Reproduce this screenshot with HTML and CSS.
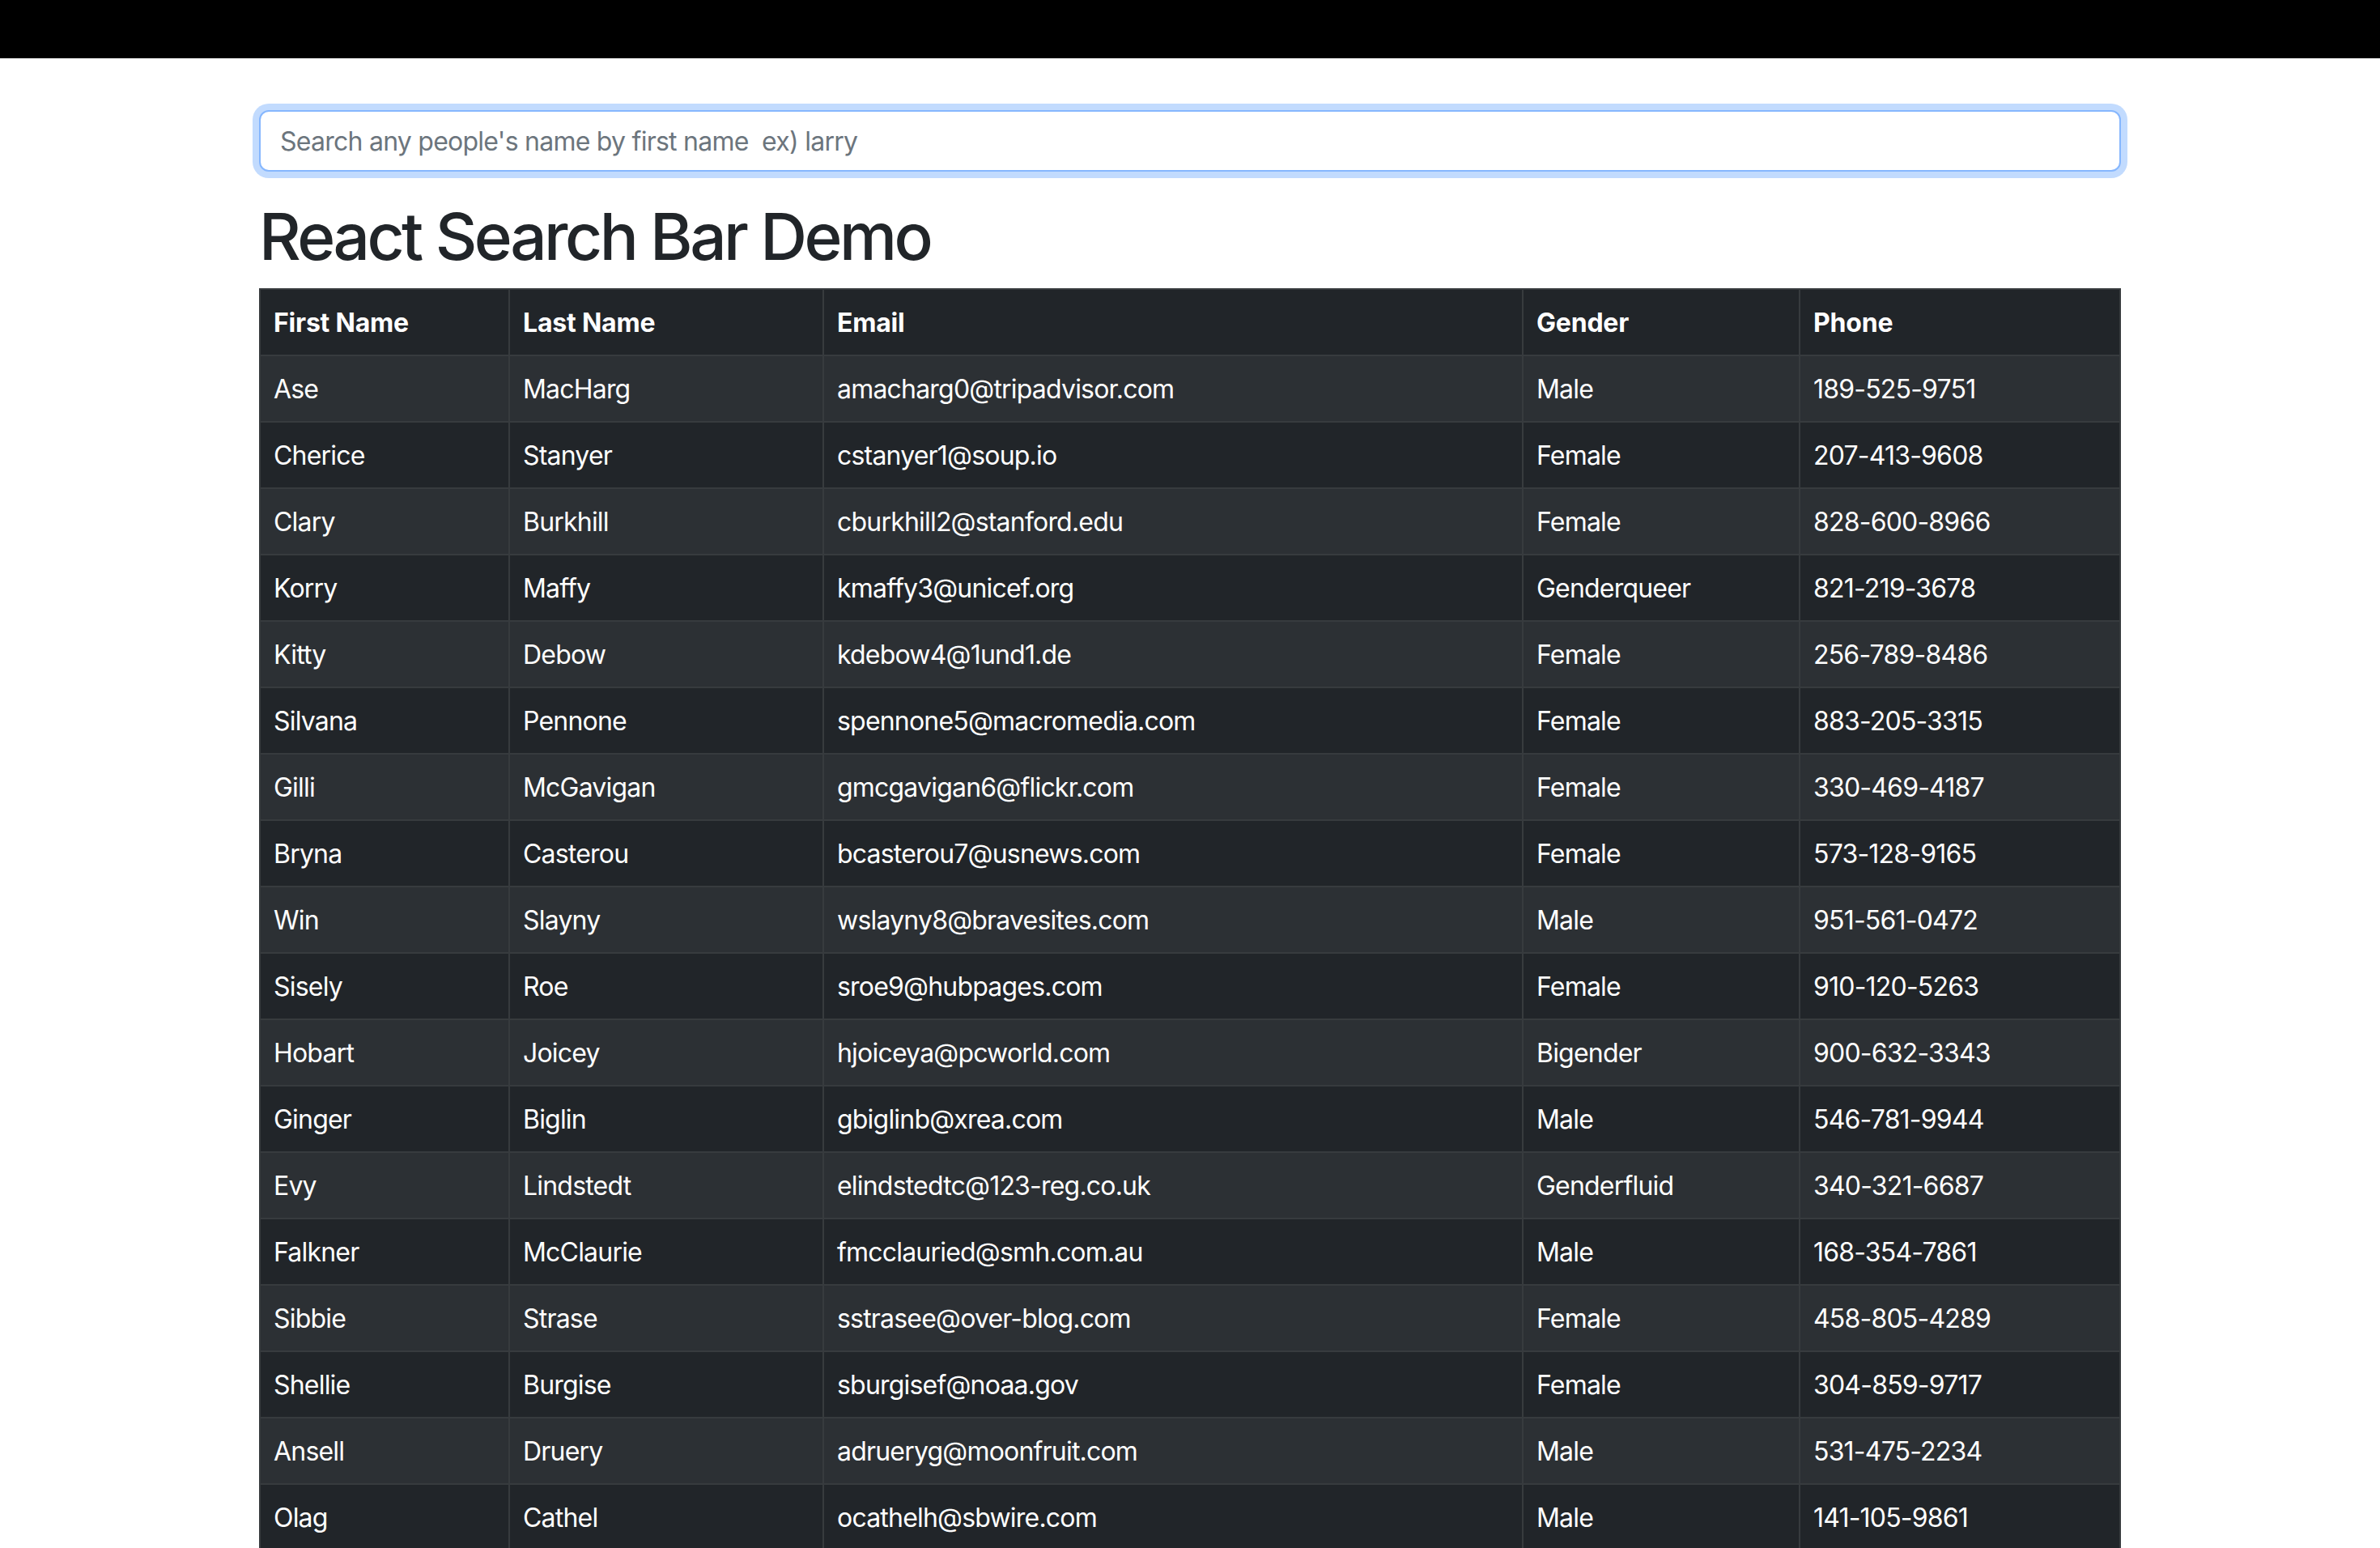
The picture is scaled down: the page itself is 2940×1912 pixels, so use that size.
FILE: index.html
```html
<!DOCTYPE html>
<html lang="en">
<head>
<meta charset="utf-8">
<title>React Search Bar Demo</title>
<link rel="stylesheet" href="styles.css">
</head>
<body>
<div class="topbar"></div>
<main class="container">
  <input class="search" type="text" placeholder="Search any people's name by first name  ex) larry">
  <h1 class="title">React Search Bar Demo</h1>
  <table class="people">
    <colgroup>
      <col class="c-first"><col class="c-last"><col class="c-email"><col class="c-gender"><col class="c-phone">
    </colgroup>
    <thead>
      <tr><th>First Name</th><th>Last Name</th><th>Email</th><th>Gender</th><th>Phone</th></tr>
    </thead>
    <tbody>
      <tr><td>Ase</td><td>MacHarg</td><td>amacharg0@tripadvisor.com</td><td>Male</td><td>189-525-9751</td></tr>
      <tr><td>Cherice</td><td>Stanyer</td><td>cstanyer1@soup.io</td><td>Female</td><td>207-413-9608</td></tr>
      <tr><td>Clary</td><td>Burkhill</td><td>cburkhill2@stanford.edu</td><td>Female</td><td>828-600-8966</td></tr>
      <tr><td>Korry</td><td>Maffy</td><td>kmaffy3@unicef.org</td><td>Genderqueer</td><td>821-219-3678</td></tr>
      <tr><td>Kitty</td><td>Debow</td><td>kdebow4@1und1.de</td><td>Female</td><td>256-789-8486</td></tr>
      <tr><td>Silvana</td><td>Pennone</td><td>spennone5@macromedia.com</td><td>Female</td><td>883-205-3315</td></tr>
      <tr><td>Gilli</td><td>McGavigan</td><td>gmcgavigan6@flickr.com</td><td>Female</td><td>330-469-4187</td></tr>
      <tr><td>Bryna</td><td>Casterou</td><td>bcasterou7@usnews.com</td><td>Female</td><td>573-128-9165</td></tr>
      <tr><td>Win</td><td>Slayny</td><td>wslayny8@bravesites.com</td><td>Male</td><td>951-561-0472</td></tr>
      <tr><td>Sisely</td><td>Roe</td><td>sroe9@hubpages.com</td><td>Female</td><td>910-120-5263</td></tr>
      <tr><td>Hobart</td><td>Joicey</td><td>hjoiceya@pcworld.com</td><td>Bigender</td><td>900-632-3343</td></tr>
      <tr><td>Ginger</td><td>Biglin</td><td>gbiglinb@xrea.com</td><td>Male</td><td>546-781-9944</td></tr>
      <tr><td>Evy</td><td>Lindstedt</td><td>elindstedtc@123-reg.co.uk</td><td>Genderfluid</td><td>340-321-6687</td></tr>
      <tr><td>Falkner</td><td>McClaurie</td><td>fmcclauried@smh.com.au</td><td>Male</td><td>168-354-7861</td></tr>
      <tr><td>Sibbie</td><td>Strase</td><td>sstrasee@over-blog.com</td><td>Female</td><td>458-805-4289</td></tr>
      <tr><td>Shellie</td><td>Burgise</td><td>sburgisef@noaa.gov</td><td>Female</td><td>304-859-9717</td></tr>
      <tr><td>Ansell</td><td>Druery</td><td>adrueryg@moonfruit.com</td><td>Male</td><td>531-475-2234</td></tr>
      <tr><td>Olag</td><td>Cathel</td><td>ocathelh@sbwire.com</td><td>Male</td><td>141-105-9861</td></tr>
    </tbody>
  </table>
</main>
</body>
</html>
```
FILE: styles.css
```css
* { box-sizing: border-box; }
html, body { margin: 0; padding: 0; background: #fff; }
body {
  font-family: Inter, "Noto Sans", "Liberation Sans", sans-serif;
  color: #212529;
  font-size: 32px;
  line-height: 1.5;
}
.topbar { height: 72px; background: #000; }
.container { width: 2300px; margin: 64px auto 0; }
.search {
  display: block;
  width: 100%;
  height: 76px;
  padding: 12px 24px;
  font-family: inherit;
  font-size: 32px;
  line-height: 48px;
  letter-spacing: -0.75px;
  color: #212529;
  background: #fff;
  border: 2px solid #86b7fe;
  border-radius: 12px;
  box-shadow: 0 0 0 8px rgba(13, 110, 253, 0.25);
  outline: none;
}
.search::placeholder { color: #6c757d; }
.title {
  margin: 32px 0 16px;
  font-size: 80px;
  font-weight: 500;
  line-height: 96px;
  letter-spacing: -3.5px;
  color: #212529;
}
.people {
  width: 2298px;
  border-collapse: collapse;
  table-layout: fixed;
  background: #212529;
  color: #fff;
}
.c-first { width: 308px; }
.c-last { width: 388px; }
.c-email { width: 864px; }
.c-gender { width: 342px; }
.c-phone { width: 396px; }
.people th, .people td {
  padding: 17px 16px 15px;
  border: 2px solid #373b3e;
  text-align: left;
  vertical-align: top;
  font-size: 32px;
  line-height: 48px;
  white-space: nowrap;
}
.people td { letter-spacing: -0.8px; }
.people th { font-weight: 700; letter-spacing: -0.2px; }
.people tbody tr:nth-child(odd) td { background: #2c3034; }
```
